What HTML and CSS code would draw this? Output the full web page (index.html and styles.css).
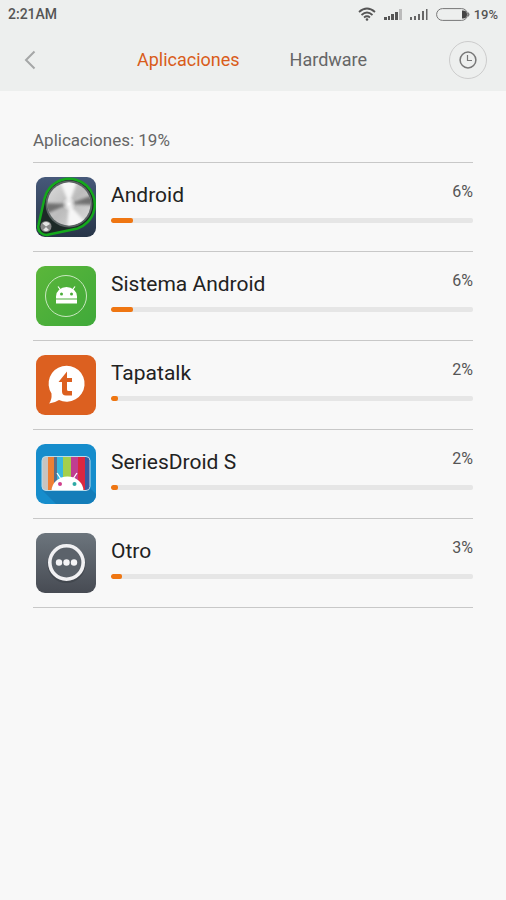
FILE: index.html
```
<!DOCTYPE html>
<html lang="es">
<head>
    <meta charset="UTF-8">
    <meta name="viewport" content="width=device-width, initial-scale=1.0">
    <title>Aplicaciones</title>
    <link rel="stylesheet" href="styles.css">
</head>
<body>
    <header class="top">
        <div class="status">
            <span class="time">2:21AM</span>
            <svg width="18" height="14" viewBox="0 0 18 14" fill="none" stroke="#555" stroke-width="1.8">
                <path d="M1 5Q9 -2 17 5M3.500 8Q9 3 14.500 8M6 10.500Q9 8 12 10.500"/>
                <circle cx="9" cy="12.500" r="1.300" fill="#555" stroke="none"/>
            </svg>
            <svg class="signal" width="18" height="13" viewBox="0 0 18 13" fill="#555">
                <path d="M0 9h3v3H0zM4 8h2v4H4zM7 6h3v6H7zM11 4h3v8h-3z"/>
                <path d="M15 1h3v11h-3z" fill="#bbb"/>
            </svg>
            <svg class="signal" width="18" height="13" viewBox="0 0 18 13" fill="#666">
                <path d="M0 9h2v3H0zM4 8h2v4H4zM8 6h2v6H8zM12 3h2v9h-2zM16 1h1.500v11H16z"/>
            </svg>
            <svg class="battery" width="34" height="13" viewBox="0 0 34 13">
                <rect x=".6" y=".6" width="31" height="11.800" rx="5.900" fill="none" stroke="#777"/>
                <path d="M26 2.500h1a4 4 0 0 1 0 8h-1z" fill="#444"/>
                <path d="M32 4q3 2.500 0 5z" fill="#777"/>
            </svg>
            <span class="level">19%</span>
        </div>
        <nav class="bar">
            <button class="back" type="button" aria-label="Atrás">
                <svg width="12" height="20" viewBox="0 0 12 20" fill="none" stroke="#a5a7a7" stroke-width="2"><path d="M10.500 1.500L2 10l8.500 8.500"/></svg>
            </button>
            <div class="tabs">
                <a class="tab active" href="#aplicaciones">Aplicaciones</a>
                <a class="tab" href="#hardware">Hardware</a>
            </div>
            <button class="history" type="button" aria-label="Historial">
                <svg width="18" height="18" viewBox="0 0 18 18" fill="none" stroke="#777"><circle cx="9" cy="9" r="7.900" stroke-width="1.500"/><path d="M8.500 4v5.500H13" stroke-width="1.200"/></svg>
            </button>
        </nav>
    </header>
    <main class="content" id="aplicaciones">
        <h1 class="total">Aplicaciones: 19%</h1>
        <ul class="list">
            <li class="item">
                <svg class="icon" viewBox="0 0 60 60">
                    <defs>
                        <linearGradient id="navy" x2="0" y2="1"><stop stop-color="#46597a"/><stop offset="1" stop-color="#273548"/></linearGradient>
                        <linearGradient id="metal" x1="0" y1="0" x2="1" y2="1"><stop stop-color="#ddd"/><stop offset=".5" stop-color="#bcbcbc"/><stop offset="1" stop-color="#ddd"/></linearGradient>
                        <radialGradient id="shine"><stop stop-color="#fff"/><stop offset="1" stop-color="#fff" stop-opacity="0"/></radialGradient>
                        <filter id="soft"><feGaussianBlur stdDeviation="1.8"/></filter>
                        <clipPath id="knob"><circle cx="33" cy="27" r="21.500"/></clipPath>
                    </defs>
                    <rect width="60" height="60" rx="9" fill="url(#navy)"/>
                    <path d="M8.500 21.500A25.500 25.500 0 1 1 41.500 51.500L13 57.500A8 8 0 0 1 2.500 48z" fill="#1d2a27" stroke="#14a81c" stroke-width="2.500"/>
                    <circle cx="33" cy="27" r="23.500" fill="#5b6363"/>
                    <circle cx="33" cy="27" r="21.500" fill="url(#metal)"/>
                    <g clip-path="url(#knob)">
                        <g filter="url(#soft)">
                            <path d="M33 27L8 26L10 37zM33 27L57 18L58 28z" fill="#707070"/>
                            <path d="M33 27L23 2H42zM33 27L31 52L50 46z" fill="#f6f6f6"/>
                        </g>
                    </g>
                    <circle cx="33" cy="27" r="7" fill="url(#shine)"/>
                    <circle cx="10" cy="49.500" r="5.500" fill="#888"/>
                    <path d="M6.500 46.500A5 5 0 0 1 14 47L10 49.500zM7 53a5 5 0 0 0 6 0l-3-3z" fill="#e5e5e5"/>
                </svg>
                <div class="info">
                    <label class="name" for="p1">Android</label>
                    <span class="percent">6%</span>
                    <progress class="usage" id="p1" value="6" max="100"></progress>
                </div>
            </li>
            <li class="item">
                <svg class="icon" viewBox="0 0 60 60">
                    <defs><linearGradient id="green" x1="0" y1="0" x2="1" y2="1"><stop stop-color="#5bb63a"/><stop offset="1" stop-color="#3fa93a"/></linearGradient></defs>
                    <rect width="60" height="60" rx="9" fill="url(#green)"/>
                    <circle cx="30" cy="30" r="20.500" fill="none" stroke="#c9e8c0"/>
                    <path d="M20 32.500v-2a10.500 9.500 0 0 1 21 0v2zM20 33.500h21v4H20z" fill="#fff"/>
                    <path d="M22 20.500l3 4M39 20.500l-3 4" stroke="#fff" stroke-width="1.200"/>
                    <circle cx="25.500" cy="28" r="1.500" fill="#4bae3a"/>
                    <circle cx="35.500" cy="28" r="1.500" fill="#4bae3a"/>
                </svg>
                <div class="info">
                    <label class="name" for="p2">Sistema Android</label>
                    <span class="percent">6%</span>
                    <progress class="usage" id="p2" value="6" max="100"></progress>
                </div>
            </li>
            <li class="item">
                <svg class="icon" viewBox="0 0 60 60">
                    <rect width="60" height="60" rx="9" fill="#dc6020"/>
                    <path d="M13 48.500Q16 45 15.500 38.500A18 18 0 1 1 23 45Q18.500 48 13 48.500z" fill="#fff"/>
                    <path d="M31 16.500V23h5v4h-5v7.500q0 1.500 1.500 1.500H36v4.500h-6q-4 0-4-4V27h-3.500z" fill="#dc6020"/>
                </svg>
                <div class="info">
                    <label class="name" for="p3">Tapatalk</label>
                    <span class="percent">2%</span>
                    <progress class="usage" id="p3" value="2" max="100"></progress>
                </div>
            </li>
            <li class="item">
                <svg class="icon" viewBox="0 0 60 60">
                    <defs><clipPath id="screen"><rect x="6" y="12.500" width="48" height="34" rx="4"/></clipPath></defs>
                    <rect width="60" height="60" rx="9" fill="#168dcc"/>
                    <path d="M6 46l14 14h31a9 9 0 0 0 9-9v-1l-8-8z" fill="#147db9"/>
                    <g clip-path="url(#screen)">
                        <path d="M6 12h6v35H6z" fill="#c8c4c0"/>
                        <path d="M12 12h6v35h-6z" fill="#ee8035"/>
                        <path d="M18 12h3v35h-3z" fill="#5a6e8a"/>
                        <path d="M21 12h6v35h-6z" fill="#38b7e0"/>
                        <path d="M27 12h8v35h-8z" fill="#a4cf4c"/>
                        <path d="M35 12h7v35h-7z" fill="#c03d91"/>
                        <path d="M42 12h7v35h-7z" fill="#dc2740"/>
                        <path d="M49 12h6v35h-6z" fill="#3959a0"/>
                        <path d="M15.500 47a16 14.500 0 0 1 32 0z" fill="#fff"/>
                    </g>
                    <rect x="6" y="12.500" width="48" height="34" rx="4" fill="none" stroke="#b9dcea"/>
                    <path d="M21 29l4 6M41 29l-4 6" stroke="#fff" stroke-width="1.300"/>
                    <circle cx="24" cy="40" r="2" fill="#d0408c"/>
                    <circle cx="38.500" cy="40" r="2" fill="#2faaa5"/>
                </svg>
                <div class="info">
                    <label class="name" for="p4">SeriesDroid S</label>
                    <span class="percent">2%</span>
                    <progress class="usage" id="p4" value="2" max="100"></progress>
                </div>
            </li>
            <li class="item">
                <svg class="icon" viewBox="0 0 60 60">
                    <defs><linearGradient id="slate" x2="0" y2="1"><stop stop-color="#6c757d"/><stop offset="1" stop-color="#474b53"/></linearGradient></defs>
                    <rect width="60" height="60" rx="9" fill="url(#slate)"/>
                    <circle cx="30.500" cy="31" r="17" fill="none" stroke="#3b3f46" stroke-width="4" opacity=".6"/>
                    <circle cx="30.500" cy="29.500" r="16.700" fill="#5b626a" stroke="#f1f1f3" stroke-width="3.600"/>
                    <g fill="#f4f4f6"><circle cx="23" cy="29.500" r="3.200"/><circle cx="30.500" cy="29.500" r="3.200"/><circle cx="38" cy="29.500" r="3.200"/></g>
                </svg>
                <div class="info">
                    <label class="name" for="p5">Otro</label>
                    <span class="percent">3%</span>
                    <progress class="usage" id="p5" value="3" max="100"></progress>
                </div>
            </li>
        </ul>
    </main>
</body>
</html>
```
FILE: styles.css
```
* {
    margin: 0;
    padding: 0;
    box-sizing: border-box;
    text-decoration: none;
    list-style: none;
}
body {
    background: #f8f8f8;
    color: #555;
    font-family: Roboto, sans-serif;
}
svg {
    display: block;
    flex-shrink: 0;
}
button {
    border: none;
    background: none;
    cursor: pointer;
}
.top {
    background: #edefee;
}
.status {
    display: flex;
    align-items: center;
    height: 28px;
    padding: 0 8px;
    font-size: 14px;
    font-weight: 500;
}
.time {
    margin-right: auto;
}
.signal {
    margin-left: 8px;
}
.battery {
    margin: 0 4px 0 8px;
}
.level {
    font-size: 13px;
}
.bar {
    display: flex;
    align-items: center;
    justify-content: space-between;
    height: 63px;
    padding: 0 19px 0 24px;
}
.back {
    display: flex;
    align-items: center;
    width: 31px;
    height: 38px;
}
.tabs {
    display: flex;
    gap: 50px;
}
.tab {
    font-size: 18px;
    line-height: 24px;
    color: #666;
}
.tab.active {
    color: #d95c1a;
}
.history {
    display: flex;
    align-items: center;
    justify-content: center;
    width: 38px;
    height: 38px;
    border: 1px solid #ccc;
    border-radius: 50%;
}
.content {
    padding: 36px 33px;
}
.total {
    padding: 1px 0 10px;
    font-size: 17px;
    font-weight: normal;
    line-height: 24px;
    color: #666;
    border-bottom: 1px solid #c8c8c8;
}
.item {
    display: flex;
    gap: 15px;
    padding: 14px 0 14px 3px;
    border-bottom: 1px solid #c8c8c8;
}
.icon {
    width: 60px;
    height: 60px;
}
.info {
    flex: 1;
    display: grid;
    grid-template-columns: 1fr auto;
    align-content: start;
    padding-top: 4px;
}
.name {
    font-size: 21px;
    line-height: 28px;
    color: #222;
}
.percent {
    font-size: 16px;
    line-height: 22px;
}
.usage {
    grid-column: 1 / 3;
    display: block;
    width: 100%;
    height: 5px;
    margin-top: 9px;
    border: none;
    border-radius: 2px;
    overflow: hidden;
    background: #e6e6e6;
    -webkit-appearance: none;
    appearance: none;
}
.usage::-webkit-progress-bar {
    background: #e6e6e6;
}
.usage::-webkit-progress-value {
    background: #ef7612;
    border-radius: 2px;
}
```
